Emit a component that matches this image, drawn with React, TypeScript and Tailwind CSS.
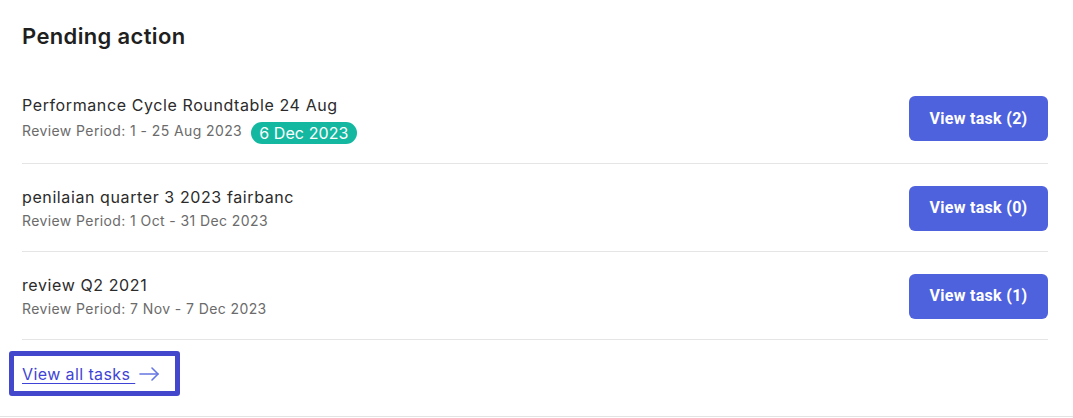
interface PendingTask {
  name: string;
  period: string;
  due?: string;
  count: number;
}

const tasks: PendingTask[] = [
  { name: 'Performance Cycle Roundtable 24 Aug', period: '1 - 25 Aug 2023', due: '6 Dec 2023', count: 2 },
  { name: 'penilaian quarter 3 2023 fairbanc', period: '1 Oct - 31 Dec 2023', count: 0 },
  { name: 'review Q2 2021', period: '7 Nov - 7 Dec 2023', count: 1 },
];

export default function App() {
  return (
    <div className="w-[1073px] h-[418px] bg-white font-['Inter',sans-serif] text-[#262626]">
      <div className="h-[417px] border-b border-[#e3e3e3] pl-[22px] pr-[25px]">
        {/* Header */}
        <h2 className="pt-[21px] h-[70px] text-[22px] leading-[30px] font-semibold tracking-[0.35px] text-[#1f1f1f]">
          Pending action
        </h2>

        {/* Task rows */}
        <ul>
          {tasks.map((task, idx) => (
            <li
              key={idx}
              className={`flex items-center justify-between border-b border-[#e5e5e5] ${
                task.due ? 'pt-[23px] pb-[19px]' : 'pt-[21px] pb-[20px]'
              }`}
            >
              <div>
                <p className="text-[16px] leading-[24px] tracking-[0.6px] text-[#2b2b2b]">{task.name}</p>
                <div className={`flex items-center gap-[9px] ${task.due ? 'mt-[1px]' : 'mt-[2px]'}`}>
                  <span className="text-[14px] leading-[20px] text-[#6b6b6b] tracking-[0.4px]">
                    Review Period: {task.period}
                  </span>
                  {task.due && (
                    <span className="mt-[4px] rounded-full bg-[#14b8a0] px-[8px] h-[22px] flex items-center text-[16px] tracking-[0.1px] text-white">
                      {task.due}
                    </span>
                  )}
                </div>
              </div>
              <button className="w-[139px] h-[45px] rounded-[6px] bg-[#4f62de] text-white text-[16px] tracking-[0.3px] font-bold font-['Roboto',sans-serif]">
                View task ({task.count})
              </button>
            </li>
          ))}
        </ul>

        {/* Footer link */}
        <div className="mt-[11px] -ml-[13px] w-[171px] h-[45px] rounded-[3px] border-[5px] border-[#4247cc] flex items-center pl-[8px]">
          <a href="#" className="flex items-center gap-[4px] text-[16px] tracking-[0.4px] text-[#3f44d6]">
            <span className="underline underline-offset-[3px]">View all tasks&nbsp;</span>
            <svg width="20" height="14" viewBox="0 0 20 14" fill="none" stroke="#6677e4" strokeWidth="1.6" strokeLinecap="round" strokeLinejoin="round">
              <path d="M1 7h18" />
              <path d="M13 1l6 6-6 6" />
            </svg>
          </a>
        </div>
      </div>
    </div>
  );
}
